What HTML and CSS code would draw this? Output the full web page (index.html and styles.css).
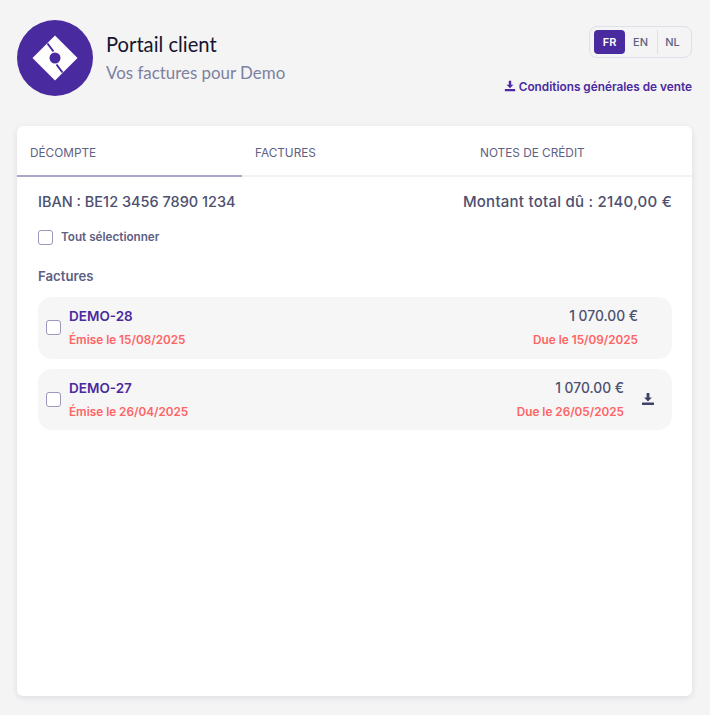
FILE: index.html
```html
<!DOCTYPE html>
<html lang="fr">
<head>
<meta charset="utf-8">
<title>Portail client</title>
<link rel="stylesheet" href="styles.css">
</head>
<body>
<svg class="sprite" width="0" height="0"><defs>
<symbol id="dl" viewBox="0 0 14 14"><path d="M5.600 1h2.800v4.600h2.500L7 9.600 3.100 5.600h2.500zM1 10.400h12V13H1z"/></symbol>
</defs></svg>
<div class="page">
  <header class="head">
    <div class="brand">
      <svg class="logo" viewBox="0 0 76 76">
        <circle cx="38" cy="38" r="38" fill="#4a2a9f"/>
        <path fill="#fff" d="M38 15.500 60.500 38 38 60.500 15.500 38z"/>
        <path fill="none" stroke="#4a2a9f" stroke-width="2" d="M30.500 23.500 36.500 31.500M45.500 52.500 39.500 44.500"/>
        <circle cx="38" cy="38" r="5.500" fill="#4a2a9f"/>
      </svg>
      <div class="brand-text">
        <div class="title">Portail client</div>
        <div class="subtitle">Vos factures pour Demo</div>
      </div>
    </div>
    <div class="head-right">
      <div class="langs">
        <span class="lang active">FR</span>
        <span class="lang">EN</span>
        <span class="lang sep">NL</span>
      </div>
      <a class="terms"><svg class="ico-sm"><use href="#dl"/></svg>Conditions générales de vente</a>
    </div>
  </header>
  <main class="card">
    <nav class="tabs">
      <div class="tab on">DÉCOMPTE</div>
      <div class="tab">FACTURES</div>
      <div class="tab">NOTES DE CRÉDIT</div>
    </nav>
    <section class="body">
      <div class="summary">
        <span class="iban">IBAN : BE12 3456 7890 1234</span>
        <span class="total">Montant total dû : 2140,00 €</span>
      </div>
      <label class="all"><span class="box"></span>Tout sélectionner</label>
      <h2 class="section">Factures</h2>
      <div class="list">
        <article class="inv">
          <span class="box"></span>
          <div class="inv-main">
            <div class="ref">DEMO-28</div>
            <div class="date">Émise le 15/08/2025</div>
          </div>
          <div class="inv-amt">
            <div class="amt">1 070.00 €</div>
            <div class="date">Due le 15/09/2025</div>
          </div>
          <span class="inv-end"></span>
        </article>
        <article class="inv">
          <span class="box"></span>
          <div class="inv-main">
            <div class="ref">DEMO-27</div>
            <div class="date">Émise le 26/04/2025</div>
          </div>
          <div class="inv-amt">
            <div class="amt">1 070.00 €</div>
            <div class="date">Due le 26/05/2025</div>
          </div>
          <span class="inv-end"><svg class="ico"><use href="#dl"/></svg></span>
        </article>
      </div>
    </section>
  </main>
</div>
</body>
</html>
```
FILE: styles.css
```css
* { box-sizing: border-box; }
html, body { margin: 0; height: 100%; }
body {
  background: #f4f4f5;
  font-family: "Inter", "Lato", sans-serif;
  color: #4d5070;
  overflow: hidden;
}
.sprite { position: absolute; }
.page { padding: 20px 18px 19px 17px; height: 715px; display: flex; flex-direction: column; }
.head { display: flex; justify-content: space-between; height: 106px; flex: none; }
.brand { display: flex; align-items: flex-start; gap: 13px; }
.logo { width: 76px; height: 76px; flex: none; }
.brand-text { padding-top: 11px; font-family: "Lato", sans-serif; }
.title { font-size: 20.200px; line-height: 26px; color: #17152e; }
.subtitle { font-size: 16.900px; line-height: 24px; margin-top: 4px; color: #7d819f; }
.head-right { display: flex; flex-direction: column; align-items: flex-end; padding-top: 6px; }
.langs { display: flex; align-items: center; height: 32px; padding: 4px; width: 103px; border: 1px solid #dfdfe8; border-radius: 8px; }
.lang { font-size: 11px; font-weight: 500; width: 31px; height: 24px; line-height: 24px; text-align: center; color: #5d6183; }
.lang.active { background: #4a2a9f; color: #fff; border-radius: 4px; font-weight: 600; }
.lang.sep { border-left: 1px solid #dfdfe8; margin-left: 1px; width: 30px; }
.terms { display: flex; align-items: center; gap: 3px; margin-top: 20px; font-size: 11.800px; font-weight: 600; color: #4a2a9f; line-height: 18px; white-space: nowrap; }
.ico-sm { width: 12px; height: 12px; fill: #4a2a9f; margin-top: -3px; }
.card { flex: 1; background: #fff; border-radius: 6px; box-shadow: 0 2px 6px rgba(30, 30, 60, .1); }
.tabs { display: flex; height: 51px; border-bottom: 2px solid #f2f2f4; }
.tab { width: 225px; height: 51px; padding: 19px 0 0 13px; font-size: 11.800px; line-height: 16px; color: #5d6183; }
.tab.on { border-bottom: 2px solid #a9a6ca; }
.body { padding: 14px 20px 0 21px; }
.summary { display: flex; justify-content: space-between; font-weight: 500; line-height: 22px; color: #4d5070; }
.iban { font-size: 14.500px; }
.total { font-size: 15px; letter-spacing: .25px; }
.all { display: flex; align-items: center; gap: 8px; margin-top: 15px; height: 18px; font-size: 11.700px; font-weight: 600; color: #5d6183; }
.box { width: 15px; height: 15px; flex: none; background: #fff; border: 1px solid #9a98bd; border-radius: 3px; }
.section { margin: 21px 0 0; font-size: 13.200px; font-weight: 600; line-height: 18px; color: #5d6183; }
.list { display: flex; flex-direction: column; gap: 10px; margin-top: 12px; }
.inv { display: flex; align-items: center; height: 61.500px; padding: 0 8px; background: #f6f6f7; border-radius: 14px; }
.inv .box { margin-right: 8px; }
.inv-main { flex: 1; }
.inv-amt { text-align: right; }
.inv-end { width: 40px; display: flex; justify-content: center; padding-left: 7px; }
.inv:first-child .inv-end { width: 26px; }
.ref { font-size: 13.500px; font-weight: 600; line-height: 18px; color: #4a2a9f; }
.amt { font-size: 13.800px; font-weight: 500; line-height: 18px; color: #4d5070; }
.date { font-size: 11.750px; font-weight: 600; line-height: 16px; margin-top: 7px; color: #ff6464; }
.ico { width: 14px; height: 14px; fill: #3f4266; }
```
